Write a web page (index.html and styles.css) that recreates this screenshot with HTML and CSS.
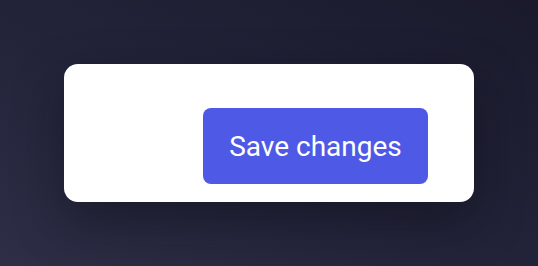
FILE: index.html
```html
<!DOCTYPE html>
<html lang="en">
<head>
    <meta charset="UTF-8">
    <meta name="viewport" content="width=device-width, initial-scale=1.0">
    <title>Save Changes</title>
    <link rel="stylesheet" href="styles.css">
</head>
<body>
    <!-- Action Card -->
    <div class="card">
        <button class="save-button" type="button">Save changes</button>
    </div>
</body>
</html>
```

FILE: styles.css
```css
html, body {
    height: 100%;
}

body {
    margin: 0;
    padding: 0;
    display: flex;
    align-items: center;
    justify-content: center;
    background: linear-gradient(to top right, #2e2f47 0%, #23243a 45%, #1a1a2c 100%);
    font-family: Roboto, "Liberation Sans", sans-serif;
}

/* Card */
.card {
    width: 410px;
    height: 138px;
    box-sizing: border-box;
    padding: 44px 46px 18px 46px;
    display: flex;
    justify-content: flex-end;
    align-items: flex-start;
    background-color: #ffffff;
    border-radius: 14px;
    box-shadow: 0 20px 50px rgba(10, 10, 20, 0.45);
}

/* Button */
.save-button {
    width: 225px;
    height: 76px;
    border: none;
    border-radius: 8px;
    background-color: #4e5ae6;
    color: #ffffff;
    font-family: Roboto, "Liberation Sans", sans-serif;
    font-size: 28px;
    font-weight: 400;
    cursor: pointer;
}

.save-button:hover {
    background-color: #4450d8;
}
```
